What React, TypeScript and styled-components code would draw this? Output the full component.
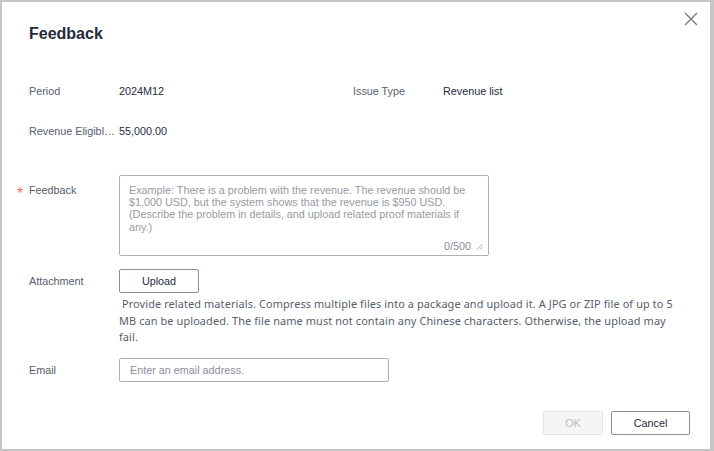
import React from "react";
import styled, { createGlobalStyle } from "styled-components";

const Global = createGlobalStyle`
  html, body { margin: 0; padding: 0; }
  body { background: #c6c6c6; font-family: "Liberation Sans", Arial, sans-serif; }
  * { box-sizing: border-box; }
`;

const Modal = styled.div`
  position: relative;
  width: 708px;
  height: 447px;
  margin: 2px 4px 2px 2px;
  background: #ffffff;
  display: flex;
  flex-direction: column;
  padding: 0 20px 0 27px;
`;

const Header = styled.div`
  padding-top: 20px;
`;

const Title = styled.h2`
  margin: 0;
  font-size: 16px;
  line-height: 24px;
  font-weight: 700;
  color: #252b3a;
`;

const CloseButton = styled.button`
  position: absolute;
  top: 10px;
  right: 12px;
  width: 14px;
  height: 14px;
  padding: 0;
  border: 0;
  background: transparent;
  cursor: pointer;
  display: flex;
`;

const InfoGrid = styled.div`
  margin-top: 33px;
  display: grid;
  grid-template-columns: 324px 324px;
  row-gap: 16px;
`;

const InfoCell = styled.div`
  display: flex;
  align-items: center;
  height: 24px;
  font-size: 10.8px;
`;

const InfoLabel = styled.span`
  width: 87px;
  margin-right: 3px;
  flex: none;
  color: #575d6c;
  white-space: nowrap;
  overflow: hidden;
  text-overflow: ellipsis;
`;

const InfoValue = styled.span`
  color: #252b3a;
`;

const Form = styled.div`
  margin-top: 32px;
  display: flex;
  flex-direction: column;
`;

const FormItem = styled.div<{ $gap?: number }>`
  display: flex;
  align-items: flex-start;
  margin-top: ${(p) => p.$gap ?? 0}px;
`;

const Label = styled.label<{ $offset?: number }>`
  position: relative;
  width: 90px;
  flex: none;
  font-size: 10.8px;
  line-height: 24px;
  padding-top: ${(p) => p.$offset ?? 0}px;
  color: #575d6c;
`;

const Required = styled.span`
  position: absolute;
  left: -12px;
  top: 11px;
  color: #f66f6a;
  font-size: 16px;
  line-height: 16px;
`;

const Control = styled.div`
  display: flex;
  flex-direction: column;
  align-items: flex-start;
  flex: 1;
`;

const TextAreaWrap = styled.div`
  position: relative;
  width: 370px;
  height: 81px;
`;

const TextArea = styled.textarea`
  width: 100%;
  height: 100%;
  resize: none;
  border: 1px solid #adb0b8;
  border-radius: 2px;
  padding: 8px 8px 20px 9px;
  font-family: "Liberation Sans", Arial, sans-serif;
  font-size: 10.8px;
  line-height: 12.2px;
  color: #252b3a;
  outline: none;
  &::placeholder { color: #969aa3; }
`;

const Counter = styled.span`
  position: absolute;
  right: 18px;
  bottom: 3px;
  font-size: 10.8px;
  line-height: 14px;
  color: #8a8e99;
`;

const ResizeHandle = styled.svg`
  position: absolute;
  right: 6px;
  bottom: 6px;
`;

const Button = styled.button<{ $width: number; $disabled?: boolean }>`
  width: ${(p) => p.$width}px;
  height: 24px;
  padding: 0;
  border-radius: 2px;
  border: 1px solid ${(p) => (p.$disabled ? "#e2e3e6" : "#8a8e99")};
  background: ${(p) => (p.$disabled ? "#f5f5f6" : "#ffffff")};
  color: ${(p) => (p.$disabled ? "#b9bcc3" : "#252b3a")};
  font-family: "Liberation Sans", Arial, sans-serif;
  font-size: 10.8px;
  cursor: ${(p) => (p.$disabled ? "not-allowed" : "pointer")};
`;

const Help = styled.p`
  margin: 3px 0 0 0;
  width: 556px;
  font-family: "Noto Sans", "Open Sans", sans-serif;
  font-size: 10.9px;
  letter-spacing: 0.12px;
  line-height: 16.5px;
  color: #575d6c;
  white-space: pre-wrap;
`;

const Input = styled.input`
  width: 270px;
  height: 24px;
  border: 1px solid #adb0b8;
  border-radius: 2px;
  padding: 0 10px;
  font-family: "Liberation Sans", Arial, sans-serif;
  font-size: 10.8px;
  color: #252b3a;
  outline: none;
  &::placeholder { color: #8a8e99; }
`;

const Footer = styled.div`
  margin-top: 29px;
  display: flex;
  justify-content: flex-end;
  gap: 8px;
`;

export default function App() {
  return (
    <>
      <Global />
      <Modal>
        <Header>
          <Title>Feedback</Title>
        </Header>
        <CloseButton aria-label="Close">
          <svg width="14" height="14" viewBox="0 0 14 14">
            <path d="M1 1L13 13M13 1L1 13" stroke="#71757f" strokeWidth="1.3" fill="none" />
          </svg>
        </CloseButton>
        <InfoGrid>
          <InfoCell>
            <InfoLabel>Period</InfoLabel>
            <InfoValue>2024M12</InfoValue>
          </InfoCell>
          <InfoCell>
            <InfoLabel>Issue Type</InfoLabel>
            <InfoValue>Revenue list</InfoValue>
          </InfoCell>
          <InfoCell>
            <InfoLabel>Revenue Eligible Amount</InfoLabel>
            <InfoValue>55,000.00</InfoValue>
          </InfoCell>
        </InfoGrid>
        <Form>
          <FormItem>
            <Label $offset={3}>
              <Required>*</Required>
              Feedback
            </Label>
            <Control>
              <TextAreaWrap>
                <TextArea placeholder="Example: There is a problem with the revenue. The revenue should be $1,000 USD, but the system shows that the revenue is $950 USD. (Describe the problem in details, and upload related proof materials if any.)" />
                <Counter>0/500</Counter>
                <ResizeHandle width="7" height="7" viewBox="0 0 7 7">
                  <path d="M6.5 1L1 6.5M6.5 4L4 6.5" stroke="#9a9da5" strokeWidth="0.9" fill="none" />
                </ResizeHandle>
              </TextAreaWrap>
            </Control>
          </FormItem>
          <FormItem $gap={13}>
            <Label>Attachment</Label>
            <Control>
              <Button $width={80}>Upload</Button>
              <Help>{" Provide related materials. Compress multiple files into a package and upload it. A JPG or ZIP file of up to 5 MB can be uploaded. The file name must not contain any Chinese characters. Otherwise, the upload may fail."}</Help>
            </Control>
          </FormItem>
          <FormItem $gap={12}>
            <Label>Email</Label>
            <Control>
              <Input placeholder="Enter an email address." />
            </Control>
          </FormItem>
        </Form>
        <Footer>
          <Button $width={60} $disabled>OK</Button>
          <Button $width={79}>Cancel</Button>
        </Footer>
      </Modal>
    </>
  );
}
